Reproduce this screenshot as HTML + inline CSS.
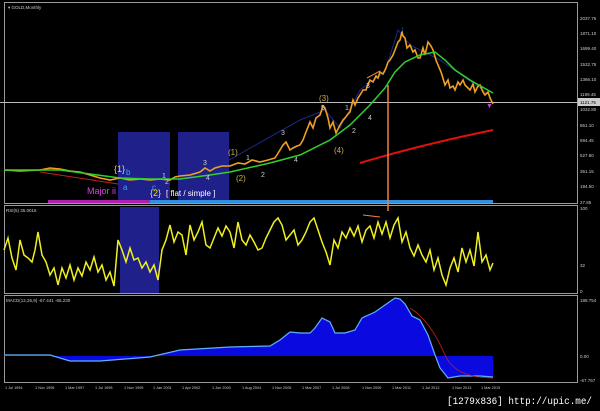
<!DOCTYPE html>
<html><head><meta charset="utf-8"><style>
html,body{margin:0;padding:0;background:#000;width:600px;height:411px;overflow:hidden}
svg{display:block;font-family:"Liberation Sans",sans-serif}
</style></head><body>
<svg width="600" height="411" viewBox="0 0 600 411">
<rect width="600" height="411" fill="#000"/>
<g fill="none" stroke="#9a9a9a" stroke-width="1">
<rect x="4.5" y="2.5" width="573" height="201"/>
<rect x="4.5" y="205.5" width="573" height="88"/>
<rect x="4.5" y="295.5" width="573" height="87"/>
</g>
<line x1="0" y1="102.5" x2="578" y2="102.5" stroke="#bbb" stroke-width="1"/>
<text x="8" y="9" fill="#ccc" font-size="4.5">▾ GOLD,Monthly</text>
<rect x="118" y="132" width="52" height="71" fill="#20208a"/>
<rect x="178" y="132" width="51" height="71" fill="#20208a"/>
<rect x="120" y="207" width="39" height="86" fill="#20208a"/>
<rect x="48" y="200" width="102" height="3" fill="#b020b0"/>
<rect x="150" y="200" width="343" height="3" fill="#3090e0"/>
<polyline points="180,180 229,160 300,120 325,110 340,128 360,90 385,72 398,30 410,45 440,60 490,95" fill="none" stroke="#1a2a88" stroke-width="1"/>
<path d="M40,172 Q80,178 118,184" fill="none" stroke="#c02020" stroke-width="1"/>
<path d="M360,163 Q420,145 493,130" fill="none" stroke="#e01010" stroke-width="2"/>
<polyline points="4,170 20,171 40,170 50,168 60,169 70,171 80,172 90,175 100,178 110,180 120,178 130,180 140,179 150,180 160,179 170,180 175,177 180,176 190,175 200,172 205,168 210,171 215,168 222,166 230,166 238,163 245,164 252,160 260,162 268,160 275,158 280,150 283,145 286,142 290,150 293,148 297,146 300,145 303,140 306,132 310,122 313,128 316,118 320,115 323,106 325,108 328,118 330,128 333,122 336,133 340,125 343,120 345,118 348,114 350,112 353,100 355,105 358,98 360,95 363,90 366,90 368,84 370,80 373,82 376,76 378,78 380,72 383,74 386,68 388,62 390,60 393,55 395,50 398,42 400,40 402,32 403,36 405,38 407,48 410,45 413,52 415,50 418,58 420,58 423,48 425,55 428,42 431,46 433,50 436,60 438,65 441,72 442,75 445,85 448,80 450,88 453,86 455,90 458,82 460,85 463,80 465,85 468,88 470,90 473,84 475,92 478,86 480,85 483,92 485,95 488,92 490,98 493,104" fill="none" stroke="#f0a020" stroke-width="1.6"/>
<polyline points="4,170 60,170 90,174 120,178 150,179 180,179 210,175 230,172 270,163 300,155 330,140 350,125 370,105 385,88 395,72 405,62 420,55 435,52 445,60 455,70 470,80 493,93" fill="none" stroke="#30d030" stroke-width="1.5"/>
<line x1="388" y1="85" x2="388" y2="211" stroke="#f08040" stroke-width="1.5"/>
<line x1="367" y1="78" x2="380" y2="71" stroke="#f08040" stroke-width="1"/>
<line x1="363" y1="215" x2="380" y2="217" stroke="#f08040" stroke-width="1"/>
<text x="400" y="32" fill="#4090ff" font-size="9">↓</text>
<text x="486" y="108" fill="#d040d0" font-size="7">▼</text>
<g font-size="7" fill="#ccc">
<text x="203" y="165">3</text><text x="162" y="178">1</text><text x="165" y="184">2</text><text x="206" y="180">4</text>
<text x="246" y="160">1</text><text x="261" y="177">2</text><text x="281" y="135">3</text><text x="294" y="162">4</text>
<text x="321" y="110">5</text><text x="345" y="110">1</text><text x="352" y="133">2</text><text x="366" y="88">3</text><text x="368" y="120">4</text>
</g>
<g font-size="9" fill="#e0e020"><text x="114" y="172">{1}</text><text x="150" y="196">{2}</text></g>
<g font-size="8" fill="#c8b050"><text x="228" y="155">(1)</text><text x="236" y="181">(2)</text><text x="319" y="101">(3)</text><text x="334" y="153">(4)</text></g>
<g font-size="8" fill="#40a0ff"><text x="126" y="175">b</text><text x="123" y="190">a</text><text x="152" y="190">c</text></g>
<text x="87" y="194" fill="#e040e0" font-size="9">Major ii</text>
<text x="166" y="196" fill="#fff" font-size="8">[ flat / simple ]</text>
<g font-size="4.5" fill="#ccc">
<text x="580" y="20">2037.75</text><text x="580" y="35">1871.10</text><text x="580" y="50">1699.40</text><text x="580" y="66">1532.75</text><text x="580" y="81">1366.10</text><text x="580" y="96">1199.45</text><text x="580" y="111">1032.80</text><text x="580" y="127">861.10</text><text x="580" y="142">694.45</text><text x="580" y="157">527.80</text><text x="580" y="173">361.15</text><text x="580" y="188">194.50</text><text x="580" y="204">27.85</text>
<text x="580" y="210">100</text><text x="580" y="267">32</text><text x="580" y="293">0</text>
<text x="580" y="302">188.754</text><text x="580" y="358">0.00</text><text x="580" y="382">-67.767</text>
</g>
<rect x="578" y="98" width="22" height="8" fill="#ccc"/>
<text x="580" y="104" fill="#000" font-size="4.5">1121.75</text>
<text x="6" y="212" fill="#ccc" font-size="4.5">RSI(5) 35.0016</text>
<polyline points="4,250 8,238 12,258 16,270 20,240 24,255 28,258 32,262 35,250 38,232 42,255 46,262 50,275 54,268 58,285 62,268 66,278 70,265 74,280 78,268 82,276 86,262 90,270 94,257 98,272 102,265 106,280 110,272 114,286 118,240 122,250 126,262 130,248 134,260 138,258 142,268 146,262 150,272 154,265 158,280 162,250 166,240 170,225 174,242 178,232 182,235 186,255 190,225 194,240 198,232 202,222 206,245 210,248 214,238 218,228 222,236 226,226 230,232 234,248 238,222 242,240 246,245 250,235 254,242 258,250 262,248 266,238 270,230 274,222 278,218 282,225 286,240 290,235 294,230 298,245 302,240 306,232 310,222 314,218 318,230 322,242 326,252 330,265 334,240 338,248 342,232 346,238 350,228 354,236 358,226 362,242 366,230 370,226 374,238 378,222 382,234 386,222 390,238 394,225 398,218 402,242 406,232 410,248 414,256 418,245 422,255 426,262 430,250 434,270 438,258 442,275 446,285 450,268 454,258 458,272 462,248 466,262 470,250 474,266 478,232 482,262 486,255 490,270 493,263" fill="none" stroke="#f0f020" stroke-width="1.5"/>
<text x="6" y="302" fill="#ccc" font-size="4.5">MACD(12,26,9) -67.441 -65.230</text>
<path d="M4,355 50,355 70,361 100,361 150,357 180,350 230,347 270,346 280,340 290,332 300,333 310,333 315,328 322,318 330,322 335,333 345,333 355,330 362,318 375,312 385,305 395,298 400,299 405,304 412,316 420,320 428,335 435,355 440,368 448,378 460,376 470,376 480,376 493,377 493,356 4,356Z" fill="#0a0ae0"/>
<path d="M4,355 50,355 70,361 100,361 150,357 180,350 230,347 270,346 280,340 290,332 300,333 310,333 315,328 322,318 330,322 335,333 345,333 355,330 362,318 375,312 385,305 395,298 400,299 405,304 412,316 420,320 428,335 435,355 440,368 448,378 460,376 470,376 480,376 493,377" fill="none" stroke="#60b0ff" stroke-width="1.2"/>
<path d="M410,308 Q430,320 445,355 Q455,378 493,378" fill="none" stroke="#c02020" stroke-width="0.8"/>
<g font-size="3.8" fill="#ccc">
<text x="5" y="389">1 Jul 1994</text><text x="35" y="389">1 Nov 1995</text><text x="65" y="389">1 Mar 1997</text><text x="95" y="389">1 Jul 1998</text><text x="124" y="389">1 Nov 1999</text><text x="153" y="389">1 Jan 2001</text><text x="182" y="389">1 Apr 2002</text><text x="212" y="389">1 Jun 2003</text><text x="242" y="389">1 Aug 2004</text><text x="272" y="389">1 Nov 2005</text><text x="302" y="389">1 Mar 2007</text><text x="332" y="389">1 Jul 2008</text><text x="362" y="389">1 Nov 2009</text><text x="392" y="389">1 Mar 2011</text><text x="422" y="389">1 Jul 2012</text><text x="452" y="389">1 Nov 2013</text><text x="481" y="389">1 Mar 2015</text>
</g>
<text x="447" y="404" fill="#fff" font-size="10" font-family="Liberation Mono,monospace" textLength="145" lengthAdjust="spacingAndGlyphs">[1279x836] http://upic.me/</text>
</svg>
</body></html>
